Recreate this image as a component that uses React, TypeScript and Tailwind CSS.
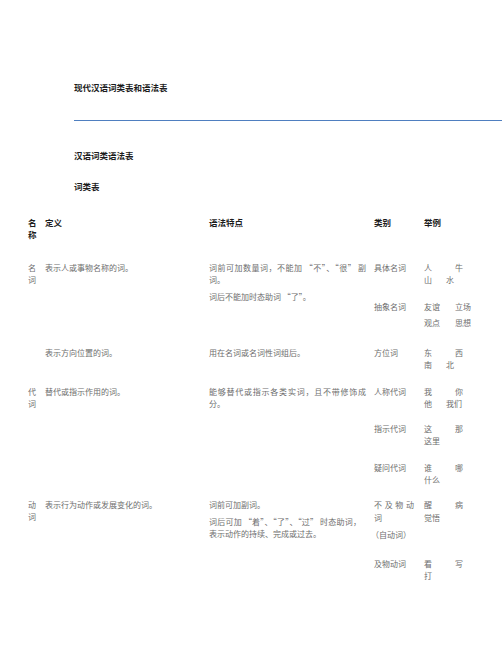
import type { ReactNode } from "react"

type Sub = {
  cat: ReactNode
  ex: ReactNode
  mt?: number
}

type RowData = {
  name: string[]
  def: string
  grammar: ReactNode
  subs: Sub[]
  mt: number
}

// wrapped line stretched to the column width, like justified text in the original
function Full({ children }: { children: ReactNode }) {
  return <span className="block text-justify [text-align-last:justify]">{children}</span>
}

// two-line example cell; second line's first word is narrower unless w2 says otherwise
function Ex({
  a,
  b,
  c,
  d,
  gap2 = 0,
  w2 = 22,
}: {
  a: string
  b?: string
  c?: string
  d?: string
  gap2?: number
  w2?: number
}) {
  return (
    <div className="leading-[12px]">
      <div className="flex">
        <span className="w-[31px]">{a}</span>
        {b && <span>{b}</span>}
      </div>
      {c && (
        <div className="flex" style={{ marginTop: gap2 }}>
          <span style={{ width: w2 }}>{c}</span>
          {d && <span>{d}</span>}
        </div>
      )}
    </div>
  )
}

const rows: RowData[] = [
  {
    name: ["名", "词"],
    def: "表示人或事物名称的词。",
    grammar: (
      <>
        <p>
          <Full>词前可加数量词，不能加 “不”、“很” 副</Full>
          词。
        </p>
        <p className="mt-[5px]">词后不能加时态助词 “了”。</p>
      </>
    ),
    mt: 22,
    subs: [
      { cat: "具体名词", ex: <Ex a="人" b="牛" c="山" d="水" /> },
      { cat: "抽象名词", ex: <Ex a="友谊" b="立场" c="观点" d="思想" gap2={4} w2={31} />, mt: 15 },
    ],
  },
  {
    name: [],
    def: "表示方向位置的词。",
    grammar: <p>用在名词或名词性词组后。</p>,
    mt: 18,
    subs: [{ cat: "方位词", ex: <Ex a="东" b="西" c="南" d="北" /> }],
  },
  {
    name: ["代", "词"],
    def: "替代或指示作用的词。",
    grammar: (
      <p>
        <Full>能够替代或指示各类实词，且不带修饰成</Full>
        分。
      </p>
    ),
    mt: 15,
    subs: [
      { cat: "人称代词", ex: <Ex a="我" b="你" c="他" d="我们" /> },
      { cat: "指示代词", ex: <Ex a="这" b="那" c="这里" />, mt: 13 },
      { cat: "疑问代词", ex: <Ex a="谁" b="哪" c="什么" />, mt: 15 },
    ],
  },
  {
    name: ["动", "词"],
    def: "表示行为动作或发展变化的词。",
    grammar: (
      <>
        <p>词前可加副词。</p>
        <p className="mt-[5px]">
          <span className="block w-[152px] text-justify [text-align-last:justify]">
            词后可加 “着”、“了”、“过” 时态助词，
          </span>
          表示动作的持续、完成或过去。
        </p>
      </>
    ),
    mt: 13,
    subs: [
      {
        cat: (
          <>
            <div className="flex w-[40px] justify-between">
              <span>不</span>
              <span>及</span>
              <span>物</span>
              <span>动</span>
            </div>
            <div className="mt-[1px]">词</div>
            <div className="mt-[5px] -ml-[3px]">（自动词）</div>
          </>
        ),
        ex: <Ex a="醒" b="病" c="觉悟" gap2={1} />,
      },
      { cat: "及物动词", ex: <Ex a="看" b="写" c="打" />, mt: 17 },
    ],
  },
]

export default function App() {
  return (
    <div className="min-h-[649px] bg-white font-['Noto_Sans_CJK_SC','Liberation_Sans',sans-serif] text-[8px] leading-[12px] text-[#6e6e6e]">
      <div className="pl-[74px] pt-[81px]">
        <h1 className="text-[8.5px] font-bold leading-[12px] text-[#1c1c1c]">现代汉语词类表和语法表</h1>
        <div className="mt-[27px] h-px bg-[#4f7fc0]" />
        <h2 className="mt-[28px] text-[8.5px] font-bold leading-[12px] text-[#1c1c1c]">汉语词类语法表</h2>
        <h3 className="mt-[19px] text-[8.5px] font-bold leading-[12px] text-[#1c1c1c]">词类表</h3>
      </div>

      <div className="pl-[28px] pt-[24px]">
        <div className="grid grid-cols-[17px_164px_165px_50px_1fr] text-[8.5px] font-bold text-[#1c1c1c]">
          <div>
            名
            <br />
            称
          </div>
          <div>定义</div>
          <div>语法特点</div>
          <div>类别</div>
          <div>举例</div>
        </div>

        {rows.map((r, i) => (
          <div key={i} className="grid grid-cols-[17px_164px_165px_1fr]" style={{ marginTop: r.mt }}>
            <div>
              {r.name.map((c) => (
                <div key={c}>{c}</div>
              ))}
            </div>
            <div>{r.def}</div>
            <div className="w-[157px]">{r.grammar}</div>
            <div>
              {r.subs.map((s, j) => (
                <div key={j} className="flex" style={{ marginTop: s.mt ?? 0 }}>
                  <div className="w-[50px]">{s.cat}</div>
                  <div>{s.ex}</div>
                </div>
              ))}
            </div>
          </div>
        ))}
      </div>
    </div>
  )
}
